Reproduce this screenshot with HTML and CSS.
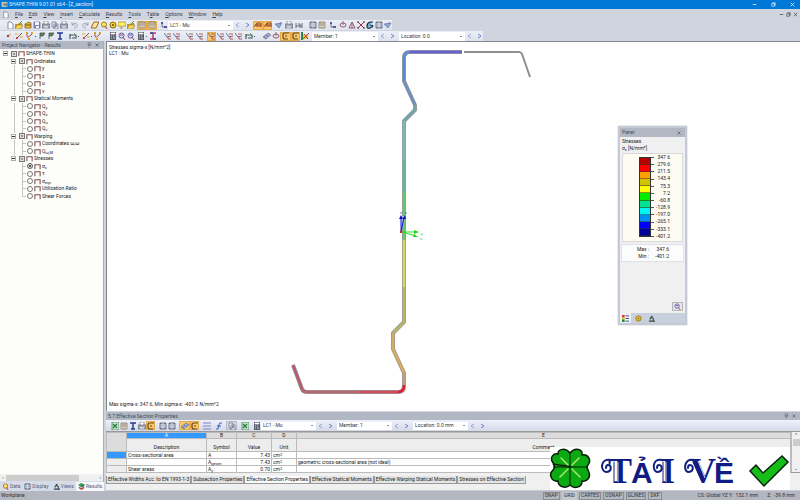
FILE: index.html
```html
<!DOCTYPE html>
<html lang="en">
<head>
<meta charset="utf-8">
<title>SHAPE-THIN 9.01.01 x64 - [Z_section]</title>
<link rel="stylesheet" href="styles.css">
</head>
<body>
<svg class="defs" aria-hidden="true">
  <symbol id="new" viewBox="0 0 8 8"><path d="M2 1h3l2 2v5H2z" fill="#fff" stroke="#667" stroke-width=".7"/></symbol>
  <symbol id="open" viewBox="0 0 8 8"><path d="M0 3h3l1-1h3v6H0z" fill="#c89b20"/><path d="M2 4h6L6 8H0z" fill="#f5d858" stroke="#77602a" stroke-width=".5"/><path d="M5 2l2-2" stroke="#395" stroke-width="1"/></symbol>
  <symbol id="box" viewBox="0 0 8 8"><path d="M1 3l4-2 2 1v5H1z" fill="#e5bd3a" stroke="#765512" stroke-width=".7"/><path d="M1 4h6" stroke="#765512"/></symbol>
  <symbol id="save" viewBox="0 0 8 8"><path d="M1 1h6v6H1z" fill="#8b8fc6" stroke="#556" stroke-width=".6"/><path d="M2 1h4v3H2zM3 5h3v2H3z" fill="#eef"/></symbol>
  <symbol id="print" viewBox="0 0 8 8"><path d="M2 0h4v4H2z" fill="#fff" stroke="#667" stroke-width=".6"/><path d="M0 3h8v4H0z" fill="#a3a9b9" stroke="#556" stroke-width=".6"/><path d="M2 6h4" stroke="#fff"/></symbol>
  <symbol id="copy" viewBox="0 0 8 8"><path d="M1 1h4v5H1zM3 3h4v5H3z" fill="#e9edf9" stroke="#667" stroke-width=".7"/><path d="M4 5h2" stroke="#36b"/></symbol>
  <symbol id="undo" viewBox="0 0 8 8"><path d="M1 1v3h3M1 4c2-3 6-2 5 1c0 1-1 2-3 2" fill="none" stroke="#99a" stroke-width=".9"/></symbol>
  <symbol id="redo" viewBox="0 0 8 8"><path d="M7 1v3H4M7 4c-2-3-6-2-5 1c0 1 1 2 3 2" fill="none" stroke="#99a" stroke-width=".9"/></symbol>
  <symbol id="func" viewBox="0 0 8 8"><path d="M7 1H5Q4 1 4 3L3 7H1M2 4h4" fill="none" stroke="#3a62b8"/></symbol>
  <symbol id="erase" viewBox="0 0 8 8"><path d="M3 1h5L5 7H0z" fill="#ffe89a" stroke="#9b6421"/></symbol>
  <symbol id="find" viewBox="0 0 8 8"><circle cx="4" cy="3.500" r="2.500" fill="#ffe65b" stroke="#9a7c1a"/><path d="M5 5l2 3" stroke="#b55" stroke-width="1.200"/></symbol>
  <symbol id="ball" viewBox="0 0 8 8"><circle cx="4" cy="4" r="3" fill="#f4cf30" stroke="#8c6c18"/><path d="M3 3h2v2H3z" fill="#8c6c18"/></symbol>
  <symbol id="note" viewBox="0 0 8 8"><path d="M0 1h8v4H5L3 8V5H0z" fill="#ffef61" stroke="#9b842a" stroke-width=".7"/></symbol>
  <symbol id="table" viewBox="0 0 8 8"><path d="M1 1h6v6H1z" fill="#fff8df" stroke="#776a62" stroke-width=".7"/><path d="M1 2h6M1 4h6M3 2v5M5 2v5" stroke="#776a62" stroke-width=".6"/></symbol>
  <symbol id="grid" viewBox="0 0 8 8"><path d="M1 1h6v6H1z" fill="#9ab" stroke="#445" stroke-width=".7"/><path d="M1 3h6M1 5h6M4 1v6" stroke="#eef" stroke-width=".6"/></symbol>
  <symbol id="nodes" viewBox="0 0 8 8"><path d="M2 1v5h5" fill="none" stroke="#556" stroke-width=".8"/><path d="M1 1h2v2H1zM4 5h3v2H4z" fill="#55a"/></symbol>
  <symbol id="point" viewBox="0 0 8 8"><circle cx="4" cy="4" r="1.200" fill="#a83c33"/><path d="M5 3l2-1" stroke="#db9930"/></symbol>
  <symbol id="line" viewBox="0 0 8 8"><path d="M1 7l6-6" stroke="#944b43"/><path d="M0 2h3M5 5h3" stroke="#e4b126"/><circle cx="2" cy="6" r="1" fill="#c33"/></symbol>
  <symbol id="arc" viewBox="0 0 8 8"><path d="M1 1v3q0 3 5-2" fill="none" stroke="#b5493d"/><path d="M0 0h2v2H0zM5 0h2v2H5zM2 6h2v2H2z" fill="#d5a126"/></symbol>
  <symbol id="flag" viewBox="0 0 8 8"><path d="M2 1v6M2 1h5L5 4H2" fill="#68805c" stroke="#455846" stroke-width=".8"/></symbol>
  <symbol id="beam" viewBox="0 0 8 8"><path d="M1 1h6M4 1v6M2 7h4" stroke="#243b93" stroke-width="1.500"/></symbol>
  <symbol id="redbeam" viewBox="0 0 8 8"><path d="M1 1h6M4 1v6M1 7h6" stroke="#b63a75" stroke-width="1.500"/><path d="M1 1h3M4 7h3" stroke="#334f99" stroke-width="1.500"/></symbol>
  <symbol id="measure" viewBox="0 0 8 8"><path d="M1 2v5M1 3h6v3H3" fill="none" stroke="#465c55" stroke-width="1.200"/><path d="M5 1l2 2" stroke="#6aa84a"/></symbol>
  <symbol id="calc" viewBox="0 0 8 8"><path d="M1 0h6v8H1z" fill="#5b5f6c"/><path d="M2 1h4v1H2zM2 4h1M4 4h1M2 6h1M4 6h2" fill="#fff" stroke="#fff" stroke-width=".7"/></symbol>
  <symbol id="view" viewBox="0 0 8 8"><circle cx="3.500" cy="3.500" r="2.500" fill="#dde4ff" stroke="#5263a8"/><path d="M2 3h3M5 5l2 3" stroke="#b34250"/></symbol>
  <symbol id="sigma" viewBox="0 0 8 8"><path d="M0 1l3 4 4-1" fill="none" stroke="#56678c" stroke-width=".9"/><path d="M3 2h4M4 4v3h3" fill="none" stroke="#b54d3f" stroke-width=".9"/></symbol>
  <symbol id="hatch" viewBox="0 0 8 8"><path d="M0 5l5-4 3 2-5 4z" fill="#7689c6" stroke="#777" stroke-width=".7"/><path d="M2 4l3 2M4 2l3 2" stroke="#eef" stroke-width=".6"/></symbol>
  <symbol id="bridge" viewBox="0 0 8 8"><path d="M0 6l3-4h4v4M1 4h6M3 2v4" fill="none" stroke="#8c4a22"/><path d="M4 5h3" stroke="#c33"/></symbol>
  <symbol id="ring" viewBox="0 0 8 8"><ellipse cx="4" cy="4" rx="3" ry="2" fill="none" stroke="#9b5867"/><path d="M4 0v4" stroke="#778"/></symbol>
  <symbol id="section" viewBox="0 0 8 8"><path d="M7 1H3q-2 0-2 2v2q0 2 2 2h3M3 4h2" fill="none" stroke="#624824" stroke-width="1.200"/></symbol>
  <symbol id="logo" viewBox="0 0 8 8"><path d="M0 1h8v6H0z" fill="#5d88a8"/><path d="M1 2h6M2 2v4h4" fill="none" stroke="#f2d9a0" stroke-width="1.200"/></symbol>
  <symbol id="colors" viewBox="0 0 8 8"><path d="M0 0h2v8H0z" fill="#318641"/><path d="M2 2l2 2 3-3v6H2z" fill="#e9c929"/><path d="M2 7l6-6M3 2l4 5" stroke="#bd3830"/></symbol>
  <symbol id="results" viewBox="0 0 8 8"><path d="M0 2l4-2 4 2-4 3z" fill="#3d9a45"/><path d="M1 4l3 2 3-2v2L4 8 1 6z" fill="#b9433c"/><path d="M4 3l3-1v2L4 5z" fill="#2c66b5"/></symbol>
  <symbol id="triangle" viewBox="0 0 8 8"><path d="M4 1l3 6H1zM4 1v6" fill="none" stroke="#8c5261" stroke-width=".9"/></symbol>
  <symbol id="cross" viewBox="0 0 8 8"><path d="M1 1l6 6M7 1L1 7" stroke="#a6333d"/><path d="M0 1h2M6 1h2M0 7h2M6 7h2" stroke="#335"/></symbol>
  <symbol id="dark" viewBox="0 0 8 8"><path d="M7 1H4Q1 2 1 5t3 2t3-2t-3-1" fill="#76b4d9" stroke="#1b2434" stroke-width="1.200"/></symbol>
  <symbol id="dims" viewBox="0 0 8 8"><path d="M1 2v5M7 2v5M1 5h6M3 3h2v4" fill="none" stroke="#58616c" stroke-width=".9"/></symbol>
  <symbol id="eye" viewBox="0 0 8 8"><path d="M0 3l7-1-3 5zM4 3l2-2" fill="#91a6d4" stroke="#6576ac" stroke-width=".7"/></symbol>
  <symbol id="lines" viewBox="0 0 8 8"><path d="M0 1h8M0 4h8M0 7h8" stroke="#7b82c1"/></symbol>
  <symbol id="excel" viewBox="0 0 8 8"><path d="M1 0h7v8H1z" fill="#c8e3cb" stroke="#44794c" stroke-width=".7"/><path d="M2 2l4 4M6 2L2 6" stroke="#247b38" stroke-width="1.200"/></symbol>
  <symbol id="shape" viewBox="0 0 8 8"><path d="M1 7V2h6v5" fill="none" stroke="#7e4d54" stroke-width="1.200"/></symbol>
  <symbol id="prev" viewBox="0 0 8 8"><path d="M5 2L2 4l3 2" fill="none" stroke="#9aa5ca"/></symbol>
  <symbol id="next" viewBox="0 0 8 8"><path d="M3 2l3 2-3 2" fill="none" stroke="#7182c8"/></symbol>
  <symbol id="close" viewBox="0 0 8 8"><path d="M2 2l4 4M6 2L2 6" stroke="currentColor" stroke-width=".8"/></symbol>
  <symbol id="min" viewBox="0 0 8 8"><path d="M2 4h4" stroke="currentColor" stroke-width=".8"/></symbol>
  <symbol id="restore" viewBox="0 0 8 8"><path d="M2 3h3v3H2zM3 3V2h3v3H5" fill="none" stroke="currentColor" stroke-width=".7"/></symbol>
  <symbol id="pin" viewBox="0 0 8 8"><path d="M3 1h3v3H3zM2 4h5M4 4v3" fill="none" stroke="#667" stroke-width=".8"/></symbol>
  <symbol id="scale" viewBox="0 0 8 8"><path d="M0 0h3v3H0z" fill="#d33"/><path d="M0 3h3v2H0z" fill="#ec3"/><path d="M0 5h3v3H0z" fill="#283"/><path d="M4 1h4M4 4h4M4 7h4" stroke="#347"/></symbol>
  <symbol id="micro" viewBox="0 0 8 8"><path d="M5 1L2 5M3 2l3 2v3M1 7h7" fill="none" stroke="#344" stroke-width="1.200"/></symbol>
</svg>

<header class="titlebar">
  <svg class="icon"><use href="#logo"/></svg>
  <h1>SHAPE-THIN 9.01.01 x64 - [Z_section]</h1>
  <div class="window-buttons">
    <button aria-label="Minimize"><svg class="icon"><use href="#min"/></svg></button>
    <button aria-label="Restore"><svg class="icon"><use href="#restore"/></svg></button>
    <button aria-label="Close"><svg class="icon"><use href="#close"/></svg></button>
  </div>
</header>

<nav class="menubar">
  <svg class="icon"><use href="#new"/></svg>
  <button><u>F</u>ile</button><button><u>E</u>dit</button><button><u>V</u>iew</button><button><u>I</u>nsert</button><button><u>C</u>alculate</button><button><u>R</u>esults</button><button><u>T</u>ools</button><button>T<u>a</u>ble</button><button><u>O</u>ptions</button><button><u>W</u>indow</button><button><u>H</u>elp</button>
  <div class="document-buttons">
    <button aria-label="Minimize document"><svg><use href="#min"/></svg></button><button aria-label="Restore document"><svg><use href="#restore"/></svg></button><button aria-label="Close document"><svg><use href="#close"/></svg></button>
  </div>
</nav>

<div class="toolbar first">
  <div class="tools">
    <button aria-label="New"><svg><use href="#new"/></svg></button><button aria-label="Open"><svg><use href="#open"/></svg></button><button aria-label="Project"><svg><use href="#box"/></svg></button><button aria-label="Save"><svg><use href="#save"/></svg></button><button aria-label="Print"><svg><use href="#print"/></svg></button><button aria-label="Report"><svg><use href="#copy"/></svg></button><button aria-label="Print all"><svg><use href="#print"/></svg></button>
  </div>
  <div class="tools">
    <button class="wide" aria-label="Undo"><svg><use href="#undo"/></svg></button><button class="wide" aria-label="Redo"><svg><use href="#redo"/></svg></button><button aria-label="Edit"><svg><use href="#erase"/></svg></button><button aria-label="Find"><svg><use href="#find"/></svg></button><button aria-label="Node"><svg><use href="#ball"/></svg></button><button aria-label="Comment"><svg><use href="#note"/></svg></button><button aria-label="Folder"><svg><use href="#open"/></svg></button>
  </div>
  <div class="tools">
    <button class="wide on" aria-label="Navigator"><svg><use href="#table"/></svg></button><button class="wide on" aria-label="Tables"><svg><use href="#table"/></svg></button>
  </div>
  <div class="tools">
    <button aria-label="Load case list"><svg><use href="#nodes"/></svg></button>
    <select class="case" aria-label="Load case"><option>LC1 - Mu</option></select>
    <button aria-label="Previous load case"><svg><use href="#prev"/></svg></button><button aria-label="Next load case"><svg><use href="#next"/></svg></button>
  </div>
  <div class="tools">
    <button class="wide on" aria-label="Show results"><svg><use href="#bridge"/></svg></button><button class="on" aria-label="Show values"><svg><use href="#bridge"/></svg></button>
  </div>
  <div class="tools">
    <button class="wide" aria-label="Render"><svg><use href="#eye"/></svg></button><button class="wide" aria-label="Plot"><svg><use href="#print"/></svg></button><button aria-label="Dimensions"><svg><use href="#dims"/></svg></button>
  </div>
  <div class="tools spaced">
    <button aria-label="Table values"><svg><use href="#grid"/></svg></button><button aria-label="Details"><svg><use href="#table"/></svg></button>
  </div>
  <div class="tools">
    <button class="wide" aria-label="Angle"><svg><use href="#nodes"/></svg></button><button aria-label="Rotate"><svg><use href="#ring"/></svg></button><button aria-label="Mirror"><svg><use href="#triangle"/></svg></button><button aria-label="Delete"><svg><use href="#cross"/></svg></button><button aria-label="Material"><svg><use href="#dark"/></svg></button><button aria-label="Mesh"><svg><use href="#grid"/></svg></button><button aria-label="View"><svg><use href="#eye"/></svg></button>
  </div>
</div>

<div class="toolbar second">
  <div class="tools">
    <button class="wide" aria-label="Point"><svg><use href="#point"/></svg></button><button class="wide" aria-label="Line"><svg><use href="#line"/></svg></button><button class="drop" aria-label="Arc"><svg><use href="#arc"/></svg></button><button aria-label="Element"><svg><use href="#flag"/></svg></button><button aria-label="Support"><svg><use href="#flag"/></svg></button><button aria-label="Section"><svg><use href="#beam"/></svg></button>
  </div>
  <div class="tools">
    <button class="drop" aria-label="Measure"><svg><use href="#measure"/></svg></button><button class="drop" aria-label="Slope"><svg><use href="#line"/></svg></button><button aria-label="Divide"><svg><use href="#arc"/></svg></button>
  </div>
  <div class="tools spaced">
    <button aria-label="Calculate"><svg><use href="#calc"/></svg></button><button aria-label="Zoom in"><svg><use href="#view"/></svg></button><button aria-label="Zoom out"><svg><use href="#view"/></svg></button><button class="drop" aria-label="Mesh"><svg><use href="#calc"/></svg></button><button aria-label="Profile"><svg><use href="#redbeam"/></svg></button>
  </div>
  <div class="tools spaced">
    <button aria-label="Force N"><svg><use href="#sigma"/></svg></button><button aria-label="Force V"><svg><use href="#sigma"/></svg></button>
  </div>
  <div class="tools">
    <button class="wide" aria-label="Moment y"><svg><use href="#sigma"/></svg></button><button aria-label="Moment z"><svg><use href="#sigma"/></svg></button>
  </div>
  <div class="tools">
    <button class="on" aria-label="Sigma x"><svg><use href="#sigma"/></svg></button><button aria-label="Tau"><svg><use href="#sigma"/></svg></button><button aria-label="Sigma eqv"><svg><use href="#sigma"/></svg></button><button aria-label="Ratio"><svg><use href="#sigma"/></svg></button><button class="drop" aria-label="Shear"><svg><use href="#measure"/></svg></button>
  </div>
  <div class="tools spaced">
    <button aria-label="Layers"><svg><use href="#hatch"/></svg></button><button aria-label="Orbit"><svg><use href="#ring"/></svg></button><button class="wide on" aria-label="Effective section"><svg><use href="#section"/></svg></button><button class="on" aria-label="Gross section"><svg><use href="#section"/></svg></button><button aria-label="Colour scale"><svg><use href="#colors"/></svg></button>
  </div>
  <div class="tools">
    <select class="member" aria-label="Member"><option>Member: 1</option></select>
    <button aria-label="Previous member"><svg><use href="#prev"/></svg></button><button aria-label="Next member"><svg><use href="#next"/></svg></button>
  </div>
  <div class="tools">
    <select class="member" aria-label="Location"><option>Location: 0.0</option></select>
    <button aria-label="Previous location"><svg><use href="#prev"/></svg></button><button aria-label="Next location"><svg><use href="#next"/></svg></button>
  </div>
</div>

<main class="workspace">
  <aside class="navigator">
    <div class="caption"><h2>Project Navigator - Results</h2><button aria-label="Pin"><svg><use href="#pin"/></svg></button><button aria-label="Close navigator"><svg><use href="#close"/></svg></button></div>
    <ul class="tree">
      <li class="root"><i class="fold"></i><input type="checkbox" id="r0"><svg><use href="#shape"/></svg><label for="r0">SHAPE-THIN</label></li>
      <li class="group"><i class="fold"></i><input type="checkbox" id="g1"><svg><use href="#shape"/></svg><label for="g1">Ordinates</label></li>
      <li class="leaf"><input type="radio" name="res" id="a1"><svg><use href="#shape"/></svg><label for="a1">y</label></li>
      <li class="leaf"><input type="radio" name="res" id="a2"><svg><use href="#shape"/></svg><label for="a2">z</label></li>
      <li class="leaf"><input type="radio" name="res" id="a3"><svg><use href="#shape"/></svg><label for="a3">u</label></li>
      <li class="leaf"><input type="radio" name="res" id="a4"><svg><use href="#shape"/></svg><label for="a4">v</label></li>
      <li class="group"><i class="fold"></i><input type="checkbox" id="g2"><svg><use href="#shape"/></svg><label for="g2">Statical Moments</label></li>
      <li class="leaf"><input type="radio" name="res" id="b1"><svg><use href="#shape"/></svg><label for="b1">Q<sub>y</sub></label></li>
      <li class="leaf"><input type="radio" name="res" id="b2"><svg><use href="#shape"/></svg><label for="b2">Q<sub>z</sub></label></li>
      <li class="leaf"><input type="radio" name="res" id="b3"><svg><use href="#shape"/></svg><label for="b3">Q<sub>u</sub></label></li>
      <li class="leaf"><input type="radio" name="res" id="b4"><svg><use href="#shape"/></svg><label for="b4">Q<sub>v</sub></label></li>
      <li class="group"><i class="fold"></i><input type="checkbox" id="g3"><svg><use href="#shape"/></svg><label for="g3">Warping</label></li>
      <li class="leaf"><input type="radio" name="res" id="c1"><svg><use href="#shape"/></svg><label for="c1">Coordinates ω,ω</label></li>
      <li class="leaf"><input type="radio" name="res" id="c2"><svg><use href="#shape"/></svg><label for="c2">Q<sub>ω,M</sub></label></li>
      <li class="group"><i class="fold"></i><input type="checkbox" id="g4"><svg><use href="#shape"/></svg><label for="g4">Stresses</label></li>
      <li class="leaf last"><input type="radio" name="res" id="d1" checked><svg><use href="#shape"/></svg><label for="d1">σ<sub>x</sub></label></li>
      <li class="leaf last"><input type="radio" name="res" id="d2"><svg><use href="#shape"/></svg><label for="d2">τ</label></li>
      <li class="leaf last"><input type="radio" name="res" id="d3"><svg><use href="#shape"/></svg><label for="d3">σ<sub>eqv</sub></label></li>
      <li class="leaf last"><input type="radio" name="res" id="d4"><svg><use href="#shape"/></svg><label for="d4">Utilization Ratio</label></li>
      <li class="leaf last"><input type="radio" name="res" id="d5"><svg><use href="#shape"/></svg><label for="d5">Shear Forces</label></li>
    </ul>
    <div class="hscroll"><span>‹</span><i></i><span>›</span></div>
    <div class="navtabs">
      <button><svg><use href="#find"/></svg>Data</button><button><svg><use href="#grid"/></svg>Display</button><button><svg><use href="#micro"/></svg>Views</button><button class="active"><svg><use href="#results"/></svg>Results</button>
    </div>
  </aside>

  <div class="content">
    <section class="canvas">
      <p>Stresses sigma-x [N/mm^2]<br>LC1 : Mu</p>
      <svg class="drawing" viewBox="107 42 693 369" preserveAspectRatio="xMinYMin meet" role="img" aria-label="Stress distribution">
        <g fill="none" stroke-linejoin="round">
          <path d="M530 77L522 54Q521 52 519 52H464" stroke="#8e8e92" stroke-width="2"/>
          <path d="M462 52H410Q404 52 404 58V81L415 105V110L404 121V322L393 333V349L404 373V386Q404 392 398 392H307Q303 392 302 389L293 365" stroke="#96989b" stroke-width="4"/>
          <g stroke-width="2.500">
            <path d="M462 52H410" stroke="#6563d2"/><path d="M410 52Q404 52 404 58V81" stroke="#5a8bd0"/>
            <path d="M404 81L415 105" stroke="#6d91c4"/><path d="M415 105V110L404 121" stroke="#72a5a5"/>
            <path d="M404 121V160" stroke="#76bdba"/><path d="M404 160V192" stroke="#68b993"/><path d="M404 192V240" stroke="#6bc76c"/>
            <path d="M404 240V287" stroke="#d8d663"/><path d="M404 287V322L393 333" stroke="#b8b666"/>
            <path d="M393 333V349L404 373" stroke="#d8ab5d"/><path d="M404 373V385" stroke="#c2a279"/>
            <path d="M404 385Q404 392 398 392" stroke="#e31b2c"/><path d="M398 392H360" stroke="#cf4956"/><path d="M360 392H307Q303 392 302 389" stroke="#b76670"/><path d="M302 389L293 365" stroke="#b75a6d"/>
          </g>
        </g>
        <path d="M401 232V216l3 0z" fill="#b8c3ff"/>
        <path d="M401 232V218M401 232l3-15" stroke="#1717d2"/>
        <path d="M399 219l2-4 2 4zM403 219l2-4 1 4z" fill="#1010b8"/>
        <path d="M402 232h14M402 232l14 4" stroke="#2ddb2d"/><path d="M414 230l5 2-5 2zM414 234l4 3-5 0z" fill="#24d424"/>
        <path d="M400 231h2v2h-2z" fill="#e01919"/>
        <g class="axis"><text x="400" y="214" fill="#2929b0">z</text><text x="405" y="214" fill="#2929b0">v</text><text x="421" y="235" fill="#29bd29">y</text><text x="420" y="240" fill="#29bd29">u</text></g>
      </svg>
      <p class="extreme">Max sigma-x: 347.6, Min sigma-x: -401.2 N/mm^2</p>

      <aside class="panel">
        <div class="caption"><h2>Panel</h2><button aria-label="Close panel"><svg><use href="#close"/></svg></button></div>
        <p>Stresses<br>σ<sub>x</sub> [N/mm²]</p>
        <div class="legend">
          <div class="swatches"><i class="s1"></i><i class="s2"></i><i class="s3"></i><i class="s4"></i><i class="s5"></i><i class="s6"></i><i class="s7"></i><i class="s8"></i><i class="s9"></i><i class="s10"></i><i class="s11"></i></div>
          <ol><li>347.6</li><li>279.6</li><li>211.5</li><li>143.4</li><li>75.3</li><li>7.2</li><li>-60.8</li><li>-128.9</li><li>-197.0</li><li>-265.1</li><li>-333.1</li><li>-401.2</li></ol>
        </div>
        <dl><dt>Max :</dt><dd>347.6</dd><dt>Min :</dt><dd>-401.2</dd></dl>
        <button class="options" aria-label="Panel options"><svg><use href="#view"/></svg></button>
        <div class="paneltabs"><button class="active" aria-label="Color scale"><svg><use href="#scale"/></svg></button><button aria-label="Factors"><svg><use href="#ball"/></svg></button><button aria-label="Filter"><svg><use href="#micro"/></svg></button></div>
      </aside>
    </section>

    <section class="properties">
      <div class="caption"><h2>5.7 Effective Section Properties</h2><button aria-label="Pin table"><svg><use href="#pin"/></svg></button><button aria-label="Close table"><svg><use href="#close"/></svg></button></div>
      <div class="tabletools">
        <div class="tools"><button aria-label="Export"><svg><use href="#excel"/></svg></button><button aria-label="Rows"><svg><use href="#table"/></svg></button><button aria-label="Columns"><svg><use href="#beam"/></svg></button><button aria-label="Print table"><svg><use href="#print"/></svg></button><button class="on" aria-label="Section"><svg><use href="#section"/></svg></button></div>
        <div class="tools"><button aria-label="Previous table"><svg><use href="#grid"/></svg></button><button aria-label="Next table"><svg><use href="#grid"/></svg></button></div>
        <div class="tools"><button class="wide on" aria-label="Effective"><svg><use href="#hatch"/></svg></button><button class="on" aria-label="Gross"><svg><use href="#section"/></svg></button></div>
        <div class="tools"><button aria-label="List"><svg><use href="#lines"/></svg></button></div>
        <div class="tools"><button aria-label="Function"><svg><use href="#func"/></svg></button></div>
        <div class="tools"><button class="wide off" aria-label="Copy"><svg><use href="#copy"/></svg></button></div>
        <div class="tools"><button aria-label="Excel"><svg><use href="#excel"/></svg></button></div>
        <div class="tools"><button aria-label="Cases"><svg><use href="#calc"/></svg></button><select class="small" aria-label="Table load case"><option>LC1 - Mu</option></select><button aria-label="Previous"><svg><use href="#prev"/></svg></button><button aria-label="Next"><svg><use href="#next"/></svg></button></div>
        <div class="tools"><select class="small" aria-label="Table member"><option>Member: 1</option></select><button aria-label="Back"><svg><use href="#prev"/></svg></button><button aria-label="Forward"><svg><use href="#next"/></svg></button></div>
        <div class="tools"><select class="small" aria-label="Table location"><option>Location: 0.0 mm</option></select><button aria-label="Back location"><svg><use href="#prev"/></svg></button><button aria-label="Forward location"><svg><use href="#next"/></svg></button></div>
      </div>
      <div class="sheet">
        <table>
          <colgroup><col class="rowhead"><col class="desc"><col class="sym"><col class="val"><col class="unit"><col></colgroup>
          <thead>
            <tr class="letters"><th rowspan="2"></th><th class="picked">A</th><th>B</th><th>C</th><th>D</th><th>E</th></tr>
            <tr class="names"><th>Description</th><th>Symbol</th><th>Value</th><th>Unit</th><th>Comment</th></tr>
          </thead>
          <tbody>
            <tr><th class="picked"></th><td>Cross-sectional area</td><td>A</td><td class="num">7.43</td><td>cm<sup>2</sup></td><td></td></tr>
            <tr><th></th><td></td><td>A<sub>geom</sub></td><td class="num">7.43</td><td>cm<sup>2</sup></td><td>geometric cross-sectional area (not ideal)</td></tr>
            <tr><th></th><td>Shear areas</td><td>A<sub>y</sub></td><td class="num">0.70</td><td>cm<sup>2</sup></td><td></td></tr>
          </tbody>
        </table>
        <div class="vscroll"><span>⌃</span><i></i><span>⌄</span></div>
      </div>
      <div class="sheettabs"><button>Effective Widths Acc. to EN 1993-1-3</button><button>Subsection Properties</button><button class="active">Effective Section Properties</button><button>Effective Statical Moments</button><button>Effective Warping Statical Moments</button><button>Stresses on Effective Section</button></div>
    </section>
  </div>
</main>

<footer class="status">
  <span class="message">Workplane</span>
  <div class="modes"><button>SNAP</button><button class="flat">GRID</button><button>CARTES</button><button>OSNAP</button><button>GLINES</button><button>DXF</button></div>
  <span class="coords">CS: Global YZ Y: &nbsp;152.1 mm</span><span class="zcoord">Z: &nbsp;-39.8 mm</span>
</footer>

<div class="badge">
  <svg viewBox="550 447 240 43" role="img" aria-label="TẢI VỀ">
    <g fill="#0baa13" stroke="#071c08" stroke-width="1.500" stroke-linejoin="round">
      <path d="M570 467C566 464 558 467 553 463C549 457 554 453 558 454C558 448 566 448 570 453C575 447 583 449 582 455C588 454 592 460 588 465Q586 467 588 470C592 477 587 482 582 481C582 488 574 489 570 485C566 489 558 487 558 481C552 482 548 475 553 470Q556 467 553 464"/>
      <path d="M570 453V485M553 467H588" fill="none" stroke-width="1"/>
    </g>
    <path d="M561 458l7 7M579 458l-7 7M568 469l-8 8M572 469l8 8" stroke="#a6e96c" stroke-width="1.500" stroke-linecap="round"/>
    <g class="lettering"><text class="swash" x="608" y="483">T</text><text class="block" x="631" y="483">Ả</text><text class="swash" x="661" y="483">I</text><text class="swash" x="690" y="483">V</text><text class="block" x="714" y="483">Ề</text></g>
    <g fill="none" stroke="#10227d" stroke-width="2" stroke-linecap="round">
      <path d="M616 460H611C600 458 600 471 606 472C612 472 612 465 608 465Q606 465 606 468"/>
      <path d="M666 460H662C652 458 652 471 657 472C663 472 663 465 659 465Q657 465 657 468"/>
      <path d="M698 460H694C684 458 683 471 688 472C694 472 694 465 690 465Q688 465 688 468"/>
      <path d="M614 462v20h4M663 462v20h4M693 462l9 20" stroke-width="1"/>
    </g>
    <path d="M618 462v20M666 462v20M698 461l7 17" stroke="#fff" stroke-width=".8"/>
    <path d="M735 471L741 465L748 473L767 456L773 462L749 486Z" transform="translate(15 0)" fill="#16bd18" stroke="#08220a" stroke-width="1.500"/>
  </svg>
</div>
</body>
</html>
```
FILE: styles.css
```css
* { box-sizing: border-box; }

body {
  margin: 0;
  height: 100vh;
  display: flex;
  flex-direction: column;
  overflow: hidden;
  position: relative;
  background: #d0d4de;
  color: #33363c;
  font: 5px/7px Roboto, "Liberation Sans", sans-serif;
}

h1, h2, p, ul, ol, dl, dd { margin: 0; padding: 0; font: inherit; list-style: none; }
button, select, input { font: inherit; color: inherit; margin: 0; padding: 0; border: 0; background: none; }
svg { display: block; flex: none; width: 7px; height: 7px; }
.defs { position: absolute; width: 0; height: 0; }
sub, sup { font-size: 4px; line-height: 0; }
sub { vertical-align: -1px; }
sup { vertical-align: 1px; }
button { display: flex; align-items: center; justify-content: center; white-space: nowrap; }

.titlebar { display: flex; align-items: center; height: 9px; flex: none; padding-left: 1px; gap: 1px; background: #0078d7; color: #e4f2ff; }
.titlebar .icon { color: #fff; }
.window-buttons { display: flex; margin-left: auto; gap: 10px; padding-right: 3px; }
.window-buttons button { width: 9px; }

.menubar { display: flex; align-items: center; height: 11px; flex: none; padding-left: 2px; gap: 6px; }
.menubar > button { color: #3b4048; }
.document-buttons { display: flex; margin-left: auto; padding-right: 1px; color: #444; }

.toolbar { display: flex; height: 10px; flex: none; align-items: center; align-self: flex-start; background: linear-gradient(#eceff7, #dde2ee); }
.toolbar.first { padding-left: 5px; gap: 2px; margin-bottom: 1px; }
.toolbar.second { padding-left: 2px; gap: 3px; }
.tools { display: flex; align-items: center; }
.tools.spaced { padding-left: 3px; }
.tools button { width: 9px; height: 9px; flex: none; }
.tools button svg { width: 8px; height: 8px; }
.tools .wide { width: 11px; }
.first .tools .wide { width: 10px; }
.tools .drop { width: 13px; gap: 1px; }
.tools .on { background: #fbc667; border: 1px solid #e5ab4b; }
.tools .off { background: #d7dae0; border: 1px solid #b4b8c0; }
.drop::after { content: ""; width: 1px; height: 1px; background: #555; }
select { appearance: none; height: 9px; padding: 0 2px; background: linear-gradient(#8991a3, #8991a3) right 3px center / 2px 1px no-repeat #fff; }
.case { width: 65px; }
.member { width: 66px; }
.small { width: 55px; height: 8px; }

.workspace { display: flex; flex: 1; min-height: 0; gap: 2px; }
.caption { display: flex; align-items: center; height: 8px; flex: none; padding: 0 2px; background: #b1b8c4; color: #454b56; }
.caption h2 { flex: 1; }
.caption button { width: 8px; }
.caption svg { width: 6px; height: 6px; }

.navigator { display: flex; flex-direction: column; width: 104px; flex: none; background: #fdfdf9; border-right: 1px solid #a8adb8; }
.tree { display: grid; grid-auto-rows: 1fr; height: 150px; margin-top: 1px; color: #222; }
.tree li { display: flex; align-items: center; gap: 1px; white-space: nowrap; }
.tree input { appearance: none; flex: none; width: 6px; height: 6px; border: 1px solid #777; background: #fff; }
.tree input[type=checkbox] { background: #999; box-shadow: inset 0 0 0 1px #ddd; }
.tree input[type=radio] { border-radius: 50%; }
.tree input:checked { background: #222; box-shadow: inset 0 0 0 1px #fff; }
.fold { width: 5px; height: 5px; margin-right: 2px; border: 1px solid #aaa; background: linear-gradient(#333, #333) center / 3px 1px no-repeat #fff; }
.root { padding-left: 3px; }
.group { padding-left: 11px; }
.leaf { padding-left: 27px; background: linear-gradient(#c4c4c4, #c4c4c4) 14px 0 / 1px 100% no-repeat, linear-gradient(#c4c4c4, #c4c4c4) 22px 0 / 1px 100% no-repeat, linear-gradient(#c4c4c4, #c4c4c4) 22px 50% / 4px 1px no-repeat; }
.leaf.last { background: linear-gradient(#c4c4c4, #c4c4c4) 22px 0 / 1px 100% no-repeat, linear-gradient(#c4c4c4, #c4c4c4) 22px 50% / 4px 1px no-repeat; }
.leaf.last:last-child { background: linear-gradient(#c4c4c4, #c4c4c4) 22px 0 / 1px 50% no-repeat, linear-gradient(#c4c4c4, #c4c4c4) 22px 50% / 4px 1px no-repeat; }
.hscroll { display: flex; height: 7px; margin-top: auto; padding: 0 2px; gap: 2px; align-items: center; background: #f0f0f0; }
.hscroll i { height: 6px; flex: 1; margin-right: 18px; background: #cdcdcd; }
.navtabs { display: flex; align-items: center; justify-content: space-between; height: 10px; background: #d5dbe9; color: #50607c; }
.navtabs button { height: 9px; padding: 0 2px; gap: 1px; }
.navtabs .active { background: #f5f7fb; }

.content { display: flex; flex: 1; flex-direction: column; min-width: 0; }
.canvas { position: relative; display: flex; flex: 1; flex-direction: column; justify-content: space-between; min-height: 0; overflow: hidden; background: #fff; border: solid #83878f; border-width: 1px 0 0 1px; color: #222; }
.canvas > p { padding: 2px; line-height: 6px; }
.canvas .extreme { padding-bottom: 4px; }
.drawing { position: absolute; inset: 0 0 auto 0; width: 100%; height: auto; }
.axis { font-size: 4px; }

.panel { position: absolute; top: 84px; right: 113px; width: 69px; border: 2px solid #c3cad6; background: #f0f0f0; box-shadow: 0 0 1px #8c929e; }
.panel .caption { height: 9px; }
.panel > p { padding: 1px 2px 0; }
.legend { display: flex; margin: 1px 2px 0; padding: 0 12px 2px 16px; height: 89px; background: #fdfbf2; border: 1px solid #d9d9d9; }
.swatches { display: flex; flex-direction: column; width: 12px; height: 80px; margin-top: 3px; border: 1px solid #333; }
.swatches i { flex: 1; border-bottom: 1px solid #3338; }
.s1 { background: #b80000; } .s2 { background: #ff0000; } .s3 { background: #ffa000; }
.s4 { background: #d2c400; } .s5 { background: #ffff00; } .s6 { background: #00ed00; }
.s7 { background: #00e394; } .s8 { background: #00f5f5; } .s9 { background: #0090f5; }
.s10 { background: #0000fa; } .s11 { background: #00009a; }
.legend ol { display: grid; grid-auto-rows: 1fr; flex: 1; height: 86px; text-align: right; }
.legend li { line-height: 7px; background: linear-gradient(#555, #555) left center / 3px 1px no-repeat; }
.panel dl { display: grid; grid-template-columns: 25px 18px; justify-content: end; margin: 2px 1px 0; padding: 1px 14px 1px 0; background: #fcfcfd; border: 1px solid #dfe2ec; text-align: right; }
.options { width: 11px; height: 9px; margin: 40px 2px 2px auto; border: 1px solid #b6b6b6; background: #e4e6ee; }
.panel dl dt { padding-right: 2px; }
.paneltabs { display: flex; height: 10px; gap: 2px; background: #c9d0dd; }
.paneltabs button { width: 11px; }
.paneltabs .active { background: #eef1f7; }

.properties { flex: none; background: #f0f0f0; border-top: 1px solid #d2d5df; border-bottom: 1px solid #c8cbd8; }
.tabletools { display: flex; align-items: center; height: 11px; padding-left: 4px; gap: 3px; background: linear-gradient(#eef1fb, #d5daea); }
.sheet { display: flex; height: 42px; border-top: 1px solid #999; border-bottom: 1px solid #999; }
table { flex: 1; width: 100%; table-layout: fixed; border-collapse: collapse; color: #222; }
.rowhead { width: 20px; } .desc { width: 80px; } .sym { width: 30px; } .val { width: 35px; } .unit { width: 25px; }
th, td { height: 7px; padding: 0 1px; border: 1px solid #bbb; line-height: 6px; font-weight: normal; text-align: left; white-space: nowrap; }
td { background: #fff; }
th { background: #ededed; text-align: center; }
.letters th { height: 6px; background: #dcdcdc; line-height: 5px; }
.names th { height: 13px; padding-top: 4px; }
.letters th.picked, th.picked { background: #3399ff; color: #fff; }
td.num { text-align: right; }
.vscroll { display: flex; flex-direction: column; justify-content: space-between; align-items: center; width: 9px; background: #f0f0f0; border-left: 1px solid #bbb; }
.vscroll i { width: 7px; height: 7px; margin-bottom: auto; background: #cdcdcd; }
.sheettabs { display: flex; padding: 3px 0 6px; color: #222; }
.sheettabs button { height: 8px; padding: 0 1px; background: #e4e4e4; border: 1px solid #999; border-top: 0; }
.sheettabs .active { background: #fafafa; }

.status { display: flex; align-items: center; height: 9px; flex: none; padding: 0 5px 0 1px; background: #b4b7bf; color: #333; }
.modes { display: flex; margin-left: auto; gap: 2px; }
.modes button { height: 8px; padding: 0 1px; border: 1px solid #8a8d94; }
.modes .flat { background: #c5c8ce; border-color: #c5c8ce; }
.coords { margin-left: 36px; }
.zcoord { margin-left: 9px; }

.badge { position: absolute; right: 10px; bottom: 10px; width: 240px; background: #fff; }
.badge svg { width: 100%; height: auto; overflow: visible; }
.lettering { fill: #101c83; font-weight: bold; }
.swash { font-family: "Liberation Serif", serif; font-size: 36px; }
.block { font-family: "Liberation Sans", sans-serif; font-size: 30px; }
```
